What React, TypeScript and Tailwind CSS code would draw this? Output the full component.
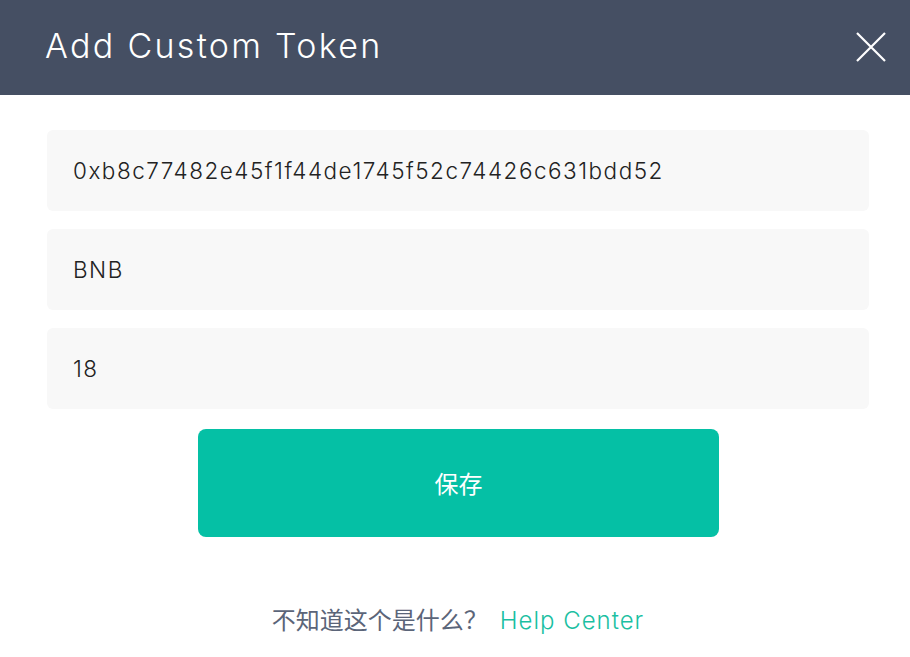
import React from "react"

const FONT = { fontFamily: '"Inter", "Noto Sans CJK SC", sans-serif' }

function Field({ value }: { value: string }) {
  return (
    <div className="flex h-[81px] items-center rounded-md bg-[#f8f8f8] px-[26px] text-[22.5px] font-light tracking-[1.5px] text-[#222]">
      {value}
    </div>
  )
}

export default function App() {
  return (
    <div className="h-[657px] w-[910px] bg-white" style={FONT}>
      <div className="flex h-[95px] items-center justify-between bg-[#454f63] pl-[45px] pr-[24px]">
        <h1 className="mt-[-4px] text-[34px] font-light tracking-[2.3px] text-white">Add Custom Token</h1>
        <svg width="30" height="30" viewBox="0 0 30 30" className="mt-[-2px]">
          <path d="M1 1 L29 29 M29 1 L1 29" stroke="white" strokeWidth="2.2" />
        </svg>
      </div>
      <div className="flex flex-col gap-[18px] px-[47px] pt-[35px] pr-[41px]">
        <Field value="0xb8c77482e45f1f44de1745f52c74426c631bdd52" />
        <Field value="BNB" />
        <Field value="18" />
      </div>
      <div className="flex justify-center pt-[20px] pl-[7px]">
        <button className="h-[108px] w-[521px] rounded-lg bg-[#05c0a5] pt-[4px] text-[24px] text-white">保存</button>
      </div>
      <div className="mt-[66px] flex justify-center gap-[12px] pl-[6px] text-[24px]">
        <span className="text-[#5b6579]">不知道这个是什么？</span>
        <span className="font-light tracking-[1px] text-[#1bbfa2]">Help Center</span>
      </div>
    </div>
  )
}
